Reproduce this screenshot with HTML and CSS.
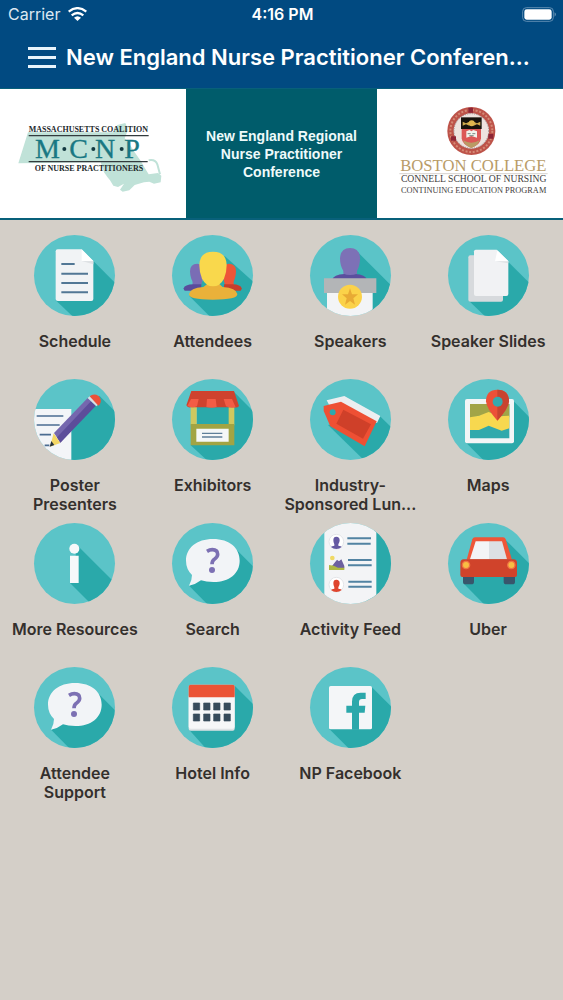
FILE: index.html
```html
<!DOCTYPE html>
<html lang="en">
<head>
<meta charset="utf-8">
<meta name="viewport" content="width=device-width, initial-scale=1">
<title>New England Nurse Practitioner Conference</title>
<link rel="stylesheet" href="styles.css">
</head>
<body>
<header class="header">
  <div class="status">
    <div class="carrier">
      <span>Carrier</span>
      <svg class="wifi" viewBox="0 0 57 42" aria-hidden="true"><g fill="none" stroke="#fff" stroke-width="7"><path d="M2 14Q28.500 -7 55 14"/><path d="M11 25Q28.500 11 46 25"/></g><path d="M18 32Q28.500 23 39 32L28.500 42Z" fill="#fff"/></svg>
    </div>
    <strong class="clock">4:16 PM</strong>
    <svg class="battery" viewBox="0 0 105 45" aria-hidden="true"><rect x="2" y="2" width="92" height="41" rx="11" fill="none" stroke="#6f97b9" stroke-width="2.500"/><rect x="7" y="7" width="82" height="31" rx="7" fill="#fff"/><path d="M98 16q6 6 0 13z" fill="#8fb0cb"/></svg>
  </div>
  <div class="navbar">
    <button class="menu" type="button" aria-label="Menu"><span class="bar"></span><span class="bar"></span><span class="bar"></span></button>
    <h1 class="title">New England Nurse Practitioner Conferen...</h1>
  </div>
</header>

<section class="banner">
  <svg class="sponsor" viewBox="0 12 558 387" role="img" aria-label="Massachusetts Coalition of Nurse Practitioners">
    <path d="M84 142L340 142L352 120L376 114L384 134L374 160L388 176L404 202L424 230L434 248L446 268L474 264L484 272L482 292L462 296L448 290L432 292L404 300L388 316L368 320L360 314L372 296L354 306L340 302L330 286L322 276L312 262L302 232L55 235Z" fill="#c0e2d8"/>
    <path d="M446 226Q466 222 472 238L480 268" fill="none" stroke="#c0e2d8" stroke-width="6"/>
    <path d="M86 152H446M86 230H443" stroke="#333b3d" stroke-width="4"/>
    <g class="serif" text-anchor="middle" fill="#22292b">
      <text class="coalition" x="265" y="140">MASSACHUSETTS COALITION</text>
      <text class="coalition" x="267" y="257">OF NURSE PRACTITIONERS</text>
      <g class="initials" fill="#197883" stroke="#197883" stroke-width="1"><text x="142" y="219">M</text><text x="236" y="219">C</text><text x="315" y="219">N</text><text x="396" y="219">P</text></g>
    </g>
    <g fill="#123940"><circle cx="193" cy="192" r="6"/><circle cx="280" cy="192" r="6"/><circle cx="365" cy="192" r="6"/></g>
  </svg>
  <div class="event">New England Regional<br>Nurse Practitioner<br>Conference</div>
  <svg class="sponsor" viewBox="6 12 558 387" role="img" aria-label="Boston College Connell School of Nursing Continuing Education Program">
    <circle cx="289" cy="138" r="72" fill="#bd5349"/>
    <circle cx="289" cy="138" r="63" fill="none" stroke="#d58a76" stroke-width="6" stroke-dasharray="6 5"/>
    <circle cx="289" cy="138" r="53" fill="#eee3df"/>
    <circle cx="289" cy="138" r="52" fill="none" stroke="#93888a" stroke-width="3" stroke-dasharray="3 4"/>
    <path d="M280 68h14v15h-14zM340 147h15v14h-15zM228 154h15v13h-15z" fill="#8d2536"/>
    <path d="M260 130H318V160Q316 180 289 188Q262 180 260 160Z" fill="#dc5757"/>
    <path d="M264 166Q289 180 314 166Q307 184 289 189Q270 184 264 166Z" fill="#b99b64"/>
    <path d="M258 97H320V132H258Z" fill="#17130d"/>
    <path d="M263 110l10 5 10-5v12l-10-4-10 4zM296 110l10 5 10-5v12l-10-4-10 4z" fill="#cfab4e"/><circle cx="290" cy="115" r="9" fill="#e0b74f"/>
    <path d="M274 139L284 135L289 139L295 135L306 139V158L289 153L274 158Z" fill="#f3f2ed"/><path d="M278 146h9M292 146h9M283 152h13" stroke="#788984" stroke-width="3"/>
    <g class="serif" text-anchor="middle">
      <text class="college" x="295" y="258" fill="#b99c68">BOSTON COLLEGE</text>
      <text class="school" x="296" y="292" fill="#3f3d3c">CONNELL SCHOOL OF NURSING</text>
      <text class="program" x="296" y="323" fill="#3f3d3c">CONTINUING EDUCATION PROGRAM</text>
    </g>
    <path d="M73 266H518" stroke="#c2bdb8" stroke-width="2"/>
  </svg>
</section>

<main>
<nav class="grid" aria-label="Conference">
  <a class="tile" href="#schedule">
    <svg class="icon" viewBox="103 30 243 243" aria-hidden="true">
      <path class="shade" d="M281 108L360 187V290H236L168 226Z"/>
      <path d="M174 73H246L281 108V222q0 6 -6 6H174q-6 0 -6 -6V79q0-6 6-6Z" fill="#f1f3f5"/>
      <path d="M246 108L281 118V108Z" fill="#dfe2e5"/><path d="M246 73V108H281Z" fill="#fff"/>
      <path d="M185 117H225M185 146H265M185 174H265M185 202H265" stroke="#527795" stroke-width="6"/>
    </svg><span class="label">Schedule</span></a>
  <a class="tile" href="#attendees">
    <svg class="icon" viewBox="516 31 243 243" aria-hidden="true">
      <path class="shade" d="M674 94L770 180V290H644L568 214Z"/>
      <path d="M570 140Q570 117 592 117Q612 118 610 150Q608 176 600 186H574Q582 175 574 163Q570 152 570 140Z" fill="#7a6db5"/>
      <path d="M708 140Q708 117 686 117Q668 118 669 150Q671 176 679 186H705Q697 175 704 163Q708 152 708 140Z" fill="#ed5638"/>
      <path d="M551 191Q554 180 580 179H604V198H554Q551 195 551 191Z" fill="#594c9c"/>
      <path d="M725 191Q722 180 698 179H672V198H722Q725 195 725 191Z" fill="#c63e2d"/>
      <path d="M567 208Q570 190 610 187L622 178H658L668 187Q709 190 712 208Q714 225 638 225Q565 225 567 208Z" fill="#eab13a"/>
      <path d="M598 121Q599 81 639 81Q679 81 680 121Q680 143 672 162Q660 185 639 185Q618 185 606 162Q598 143 598 121Z" fill="#f9d84c"/>
    </svg><span class="label">Attendees</span></a>
  <a class="tile" href="#speakers">
    <svg class="icon" viewBox="87 30 243 243" aria-hidden="true">
      <path class="shade" d="M230 81L340 191V290H270V200L190 160Z"/>
      <path d="M153 164Q158 149 190 147H222Q254 149 258 164Z" fill="#5b4f9e"/>
      <path d="M177 100Q179 69 207 69Q236 69 237 100Q237 122 228 138V146Q207 154 187 146V138Q177 122 177 100Z" fill="#7d71b6"/>
      <path d="M138 202H275V275H138Z" fill="#f3f4f6"/><path d="M129 160H286V204H129Z" fill="#b3b5b7"/>
      <circle cx="207" cy="215" r="36" fill="#fbd249"/><path d="M207 190L213 208H231L217 220L222 239L207 228L192 239L197 220L183 208H201Z" fill="#e8aa34"/>
    </svg><span class="label">Speakers</span></a>
  <a class="tile" href="#slides">
    <svg class="icon" viewBox="500 31 243 243" aria-hidden="true">
      <path class="shade" d="M681 112L760 190V290H627L564 230Z"/>
      <rect x="561" y="92" width="104" height="139" rx="6" fill="#d7dadd"/>
      <path d="M583 75H646L681 109V208q0 6-6 6H584q-6 0-6-6V80q0-5 5-5Z" fill="#f1f2f4"/>
      <path d="M648 77L641 110H681Z" fill="#fff"/><path d="M641 110H681V116Z" fill="#dfe2e4"/>
    </svg><span class="label">Speaker Slides</span></a>
  <a class="tile" href="#posters">
    <svg class="icon" viewBox="103 27 243 243" aria-hidden="true">
      <path class="shade" d="M299 77L370 148V290H214V170Z"/>
      <path d="M95 117H215V280H95Z" fill="#f3f5f8"/>
      <path d="M111 138H191M111 165H180M120 194H154M135 226H149" stroke="#4b6c91" stroke-width="5"/>
      <path d="M163 189L264 84L285 105L182 218Z" fill="#7567ae"/><path d="M172 202L274 94L288 108L182 218Z" fill="#5c4d9a"/>
      <path d="M264 84L270 79L297 103L290 109Z" fill="#dadde3"/>
      <path d="M270 79Q282 69 297 78Q309 91 300 104L296 107Z" fill="#ed5038"/>
      <path d="M162 190L182 219L151 230Z" fill="#f4d765"/><path d="M155 213L164 225L150 230Z" fill="#27333d"/>
    </svg><span class="label">Poster<br>Presenters</span></a>
  <a class="tile" href="#exhibitors">
    <svg class="icon" viewBox="517 27 243 243" aria-hidden="true">
      <path class="shade" d="M704 67L780 143V290H643L573 226L592 162V108Z"/>
      <path d="M573 106H591V166H573ZM687 106H704V166H687Z" fill="#cfc85f"/>
      <path d="M573 162H704V226H573Z" fill="#a2a443"/><path d="M590 176H687V215H590Z" fill="#f5f7f7"/>
      <path d="M607 190H668M607 201H668" stroke="#5f7f99" stroke-width="4"/>
      <path d="M575 63H703L718 108Q714 114 703 112H572Q564 114 560 106Z" fill="#cf422e"/>
      <path d="M574 87H597L592 109Q578 115 563 108ZM622 87H648L651 111Q636 116 620 111ZM672 87H697L708 112Q692 115 679 109Z" fill="#f35c45"/>
    </svg><span class="label">Exhibitors</span></a>
  <a class="tile" href="#lunch">
    <svg class="icon" viewBox="87 27 243 243" aria-hidden="true">
      <path class="shade" d="M297 139L350 190V290H269L141 165Z"/>
      <path d="M137 91L190 78L298 138L288 159L180 102L144 104Z" fill="#eceef0"/>
      <path d="M128 108L180 95L287 154L251 229L148 169L128 123Z" fill="#ee5034"/>
      <path d="M187 119L270 163L246 206L166 161Z" fill="#cf4029"/><circle cx="155" cy="127" r="9" fill="#2ea8ad"/>
    </svg><span class="label">Industry-<br>Sponsored Lun...</span></a>
  <a class="tile" href="#maps">
    <svg class="icon" viewBox="500 27 243 243" aria-hidden="true">
      <path class="shade" d="M697 94L760 157V290H626L552 216Z"/>
      <rect x="551" y="87" width="147" height="133" rx="6" fill="#f2f5f6"/>
      <path d="M566 102H684V205H566Z" fill="#30a9ac"/><path d="M566 102H684V142L625 129L590 138L566 144Z" fill="#a1a447"/>
      <path d="M566 142L593 137L622 126L653 139L684 137V175L661 182L622 167L593 180H566Z" fill="#f7d84f"/>
      <path d="M648 152Q615 115 614 94Q614 60 648 59Q683 60 683 94Q682 115 648 152Z" fill="#ec5038"/><path d="M648 59Q683 60 683 94Q682 115 648 152Z" fill="#c84430"/><circle cx="649" cy="95" r="15" fill="#35a9ad"/>
    </svg><span class="label">Maps</span></a>
  <a class="tile" href="#resources">
    <svg class="icon" viewBox="103 24 243 243" aria-hidden="true">
      <path class="shade" d="M234 92L350 208V290H297L211 204Z"/><circle cx="224" cy="101" r="15" fill="#f7f9fa"/><path d="M211 122H237V204H211Z" fill="#f7f9fa"/>
    </svg><span class="label">More Resources</span></a>
  <a class="tile" href="#search">
    <svg class="icon" viewBox="516 25 243 243" aria-hidden="true">
      <path class="shade" d="M711 107L780 176V290H643L568 214Z"/>
      <path d="M639 73C689 73 719 100 719 138C719 176 688 202 640 202Q618 202 603 197Q588 209 567 213Q576 198 576 181Q558 163 558 138C558 100 590 73 639 73Z" fill="#f2f4f7"/>
      <path d="M621 110Q629 105 637 105Q653 105 653 119Q653 127 644 133Q636 138 636 149" fill="none" stroke="#7c70b3" stroke-width="11"/><circle cx="636" cy="166" r="9" fill="#7c70b3"/>
    </svg><span class="label">Search</span></a>
  <a class="tile" href="#activity">
    <svg class="icon" viewBox="88 25 243 243" aria-hidden="true">
      <path class="shade" d="M280 43L350 90V290H250Z"/><path d="M131 20H287V275H131Z" fill="#f3f4f6"/>
      <g fill="#fff" stroke="#e2e4e8" stroke-width="3"><circle cx="167" cy="81" r="22"/><circle cx="167" cy="210" r="22"/></g>
      <path d="M158 76Q158 66 167 66Q177 66 177 77Q177 84 173 89V93Q183 94 183 97Q176 103 167 103Q158 103 151 97Q153 94 161 93V89Q158 84 158 76Z" fill="#665aa3"/>
      <path d="M158 205Q158 195 167 195Q177 195 177 206Q177 213 173 218V222Q183 223 183 226Q176 232 167 232Q158 232 151 226Q153 223 161 222V218Q158 213 158 205Z" fill="#df452e"/>
      <circle cx="155" cy="130" r="7" fill="#f0d965"/><path d="M154 154L169 135L175 140L182 134L191 154V161H154Z" fill="#6c609f"/><path d="M145 151Q160 151 172 159H191V166H145Z" fill="#aeb842"/>
      <path d="M200 71H271M200 87H270M202 136H273M202 152H273M203 201H273M203 216H273" stroke="#5283a2" stroke-width="6"/>
    </svg><span class="label">Activity Feed</span></a>
  <a class="tile" href="#uber">
    <svg class="icon" viewBox="499 23 243 243" aria-hidden="true">
      <path class="shade" d="M672 74L770 172V290H630L545 204Z"/>
      <path d="M544 181H577V199q0 8-8 8H552q-8 0-8-8ZM666 181H700V199q0 8-8 8H674q-8 0-8-8Z" fill="#38566c"/>
      <path d="M555 133L572 72Q574 66 580 66H664Q670 66 672 72L691 133Z" fill="#ee5638"/>
      <path d="M582 78H622V132H565Z" fill="#f3f4f6"/><path d="M622 78H661L676 132H622Z" fill="#dce0e4"/>
      <path d="M546 132H696Q706 132 706 143V179q0 6-6 6H542q-6 0-6-6V143Q536 132 546 132Z" fill="#d0432b"/>
      <g fill="#f8bd43" stroke="#ef7344" stroke-width="4"><circle cx="553" cy="149" r="11"/><circle cx="689" cy="149" r="11"/></g>
    </svg><span class="label">Uber</span></a>
  <a class="tile" href="#support">
    <svg class="icon" viewBox="516 25 243 243" aria-hidden="true">
      <path class="shade" d="M711 107L780 176V290H643L568 214Z"/>
      <path d="M639 73C689 73 719 100 719 138C719 176 688 202 640 202Q618 202 603 197Q588 209 567 213Q576 198 576 181Q558 163 558 138C558 100 590 73 639 73Z" fill="#f2f4f7"/>
      <path d="M621 110Q629 105 637 105Q653 105 653 119Q653 127 644 133Q636 138 636 149" fill="none" stroke="#7c70b3" stroke-width="11"/><circle cx="636" cy="166" r="9" fill="#7c70b3"/>
    </svg><span class="label">Attendee<br>Support</span></a>
  <a class="tile" href="#hotel">
    <svg class="icon" viewBox="517 22 243 243" aria-hidden="true">
      <path class="shade" d="M705 78L780 153V290H640L569 211Z"/>
      <rect x="567" y="75" width="138" height="138" rx="6" fill="#dfe2e5"/><path d="M567 108H705V201q0 6-6 6H573q-6 0-6-6Z" fill="#f6f7f8"/>
      <path d="M573 75H699q6 0 6 6V113H567V81q0-6 6-6Z" fill="#eb5436"/>
      <path d="M581 130h19v21h-19zM612 130h19v21h-19zM642 130h19v21h-19zM673 130h19v21h-19zM581 163h19v21h-19zM612 163h19v21h-19zM642 163h19v21h-19zM673 163h19v21h-19z" fill="#374b5b" stroke="#374b5b" stroke-width="2" stroke-linejoin="round"/>
    </svg><span class="label">Hotel Info</span></a>
  <a class="tile" href="#facebook">
    <svg class="icon" viewBox="930 22 243 243" aria-hidden="true">
      <path class="shade" d="M1115 82L1190 157V290H1070L988 208Z"/><rect x="987" y="79" width="129" height="130" rx="5" fill="#f4f6f8"/>
      <path d="M1056 210V159H1039V138H1056V126Q1056 99 1082 99H1097V118H1086Q1077 118 1077 127V138H1096L1094 159H1077V210Z" fill="#2ba8ab"/>
    </svg><span class="label">NP Facebook</span></a>
</nav>
</main>
</body>
</html>
```
FILE: styles.css
```css
* { box-sizing: border-box; }
body {
  margin: 0;
  min-height: 100vh;
  background: #d4cfc8;
  color: #34302d;
  font-family: Inter, "Liberation Sans", sans-serif;
}
.header { background: #014a81; color: #fff; }
.status {
  display: grid;
  grid-template-columns: 1fr auto 1fr;
  align-items: center;
  height: 28px;
  padding: 0 6px 0 8px;
  font-size: 16px;
}
.carrier { display: flex; align-items: center; gap: 8px; color: #dce8f2; }
.wifi { width: 19px; height: 14px; }
.clock { font-weight: 600; }
.battery { justify-self: end; width: 35px; height: 15px; }
.navbar {
  display: flex;
  align-items: center;
  gap: 10px;
  height: 60px;
  padding: 0 24px 2px 28px;
}
.menu {
  display: flex;
  flex-direction: column;
  gap: 6px;
  width: 28px;
  padding: 0;
  border: 0;
  background: none;
}
.bar { width: 28px; height: 3px; background: #e8f4fc; }
.title {
  flex: 1;
  margin: 0;
  font-size: 22px;
  font-weight: 600;
  line-height: 28px;
  white-space: nowrap;
}
.banner {
  display: grid;
  grid-template-columns: 186fr 191fr 186fr;
  padding: 1px 0 2px;
  background: #08607a;
}
.sponsor { display: block; width: 100%; background: #fff; }
.serif { font-family: "Liberation Serif", serif; }
.coalition { font-size: 24px; font-weight: 700; }
.initials { font-size: 84px; }
.college { font-size: 50px; font-weight: 400; }
.school { font-size: 29px; }
.program { font-size: 25px; }
.event {
  display: flex;
  flex-direction: column;
  justify-content: center;
  background: #005c6b;
  color: #eefafa;
  font-family: "Liberation Sans", sans-serif;
  font-size: 14px;
  font-weight: 700;
  line-height: 18px;
  text-align: center;
}
.grid {
  display: grid;
  grid-template-columns: repeat(4, minmax(0, 1fr));
  row-gap: 9px;
  padding: 15px 6px;
}
.tile {
  display: flex;
  flex-direction: column;
  align-items: center;
  gap: 16px;
  color: inherit;
  text-decoration: none;
}
.icon {
  width: 81px;
  height: 81px;
  border-radius: 50%;
  background: #5bc4c8;
}
.shade { fill: #2aa9aa; }
.label {
  min-height: 38px;
  font-size: 16px;
  font-weight: 600;
  line-height: 19px;
  text-align: center;
  white-space: nowrap;
}
```
